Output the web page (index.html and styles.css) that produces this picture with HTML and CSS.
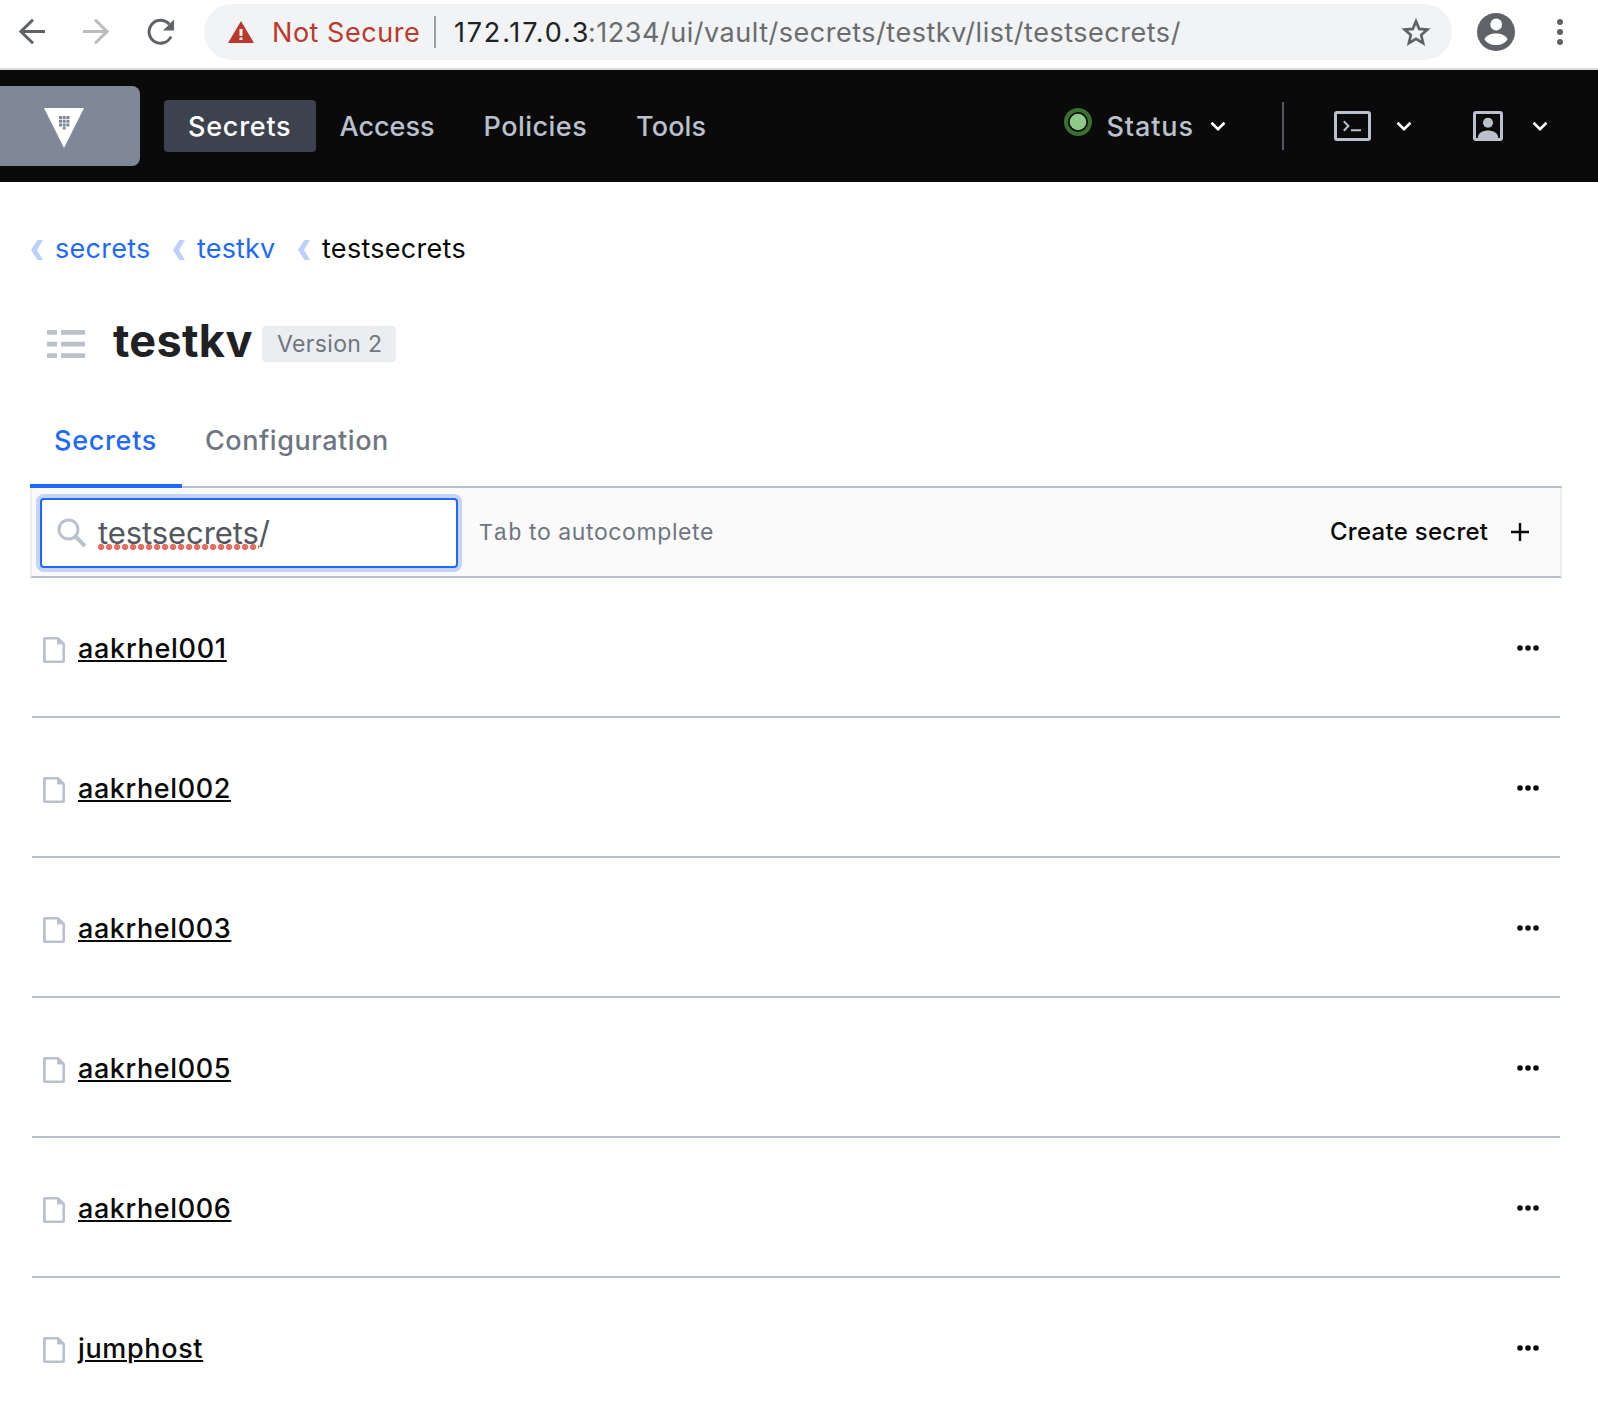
FILE: index.html
```
<!DOCTYPE html>
<html lang="en">
<head>
<meta charset="utf-8">
<title>Vault</title>
<link rel="stylesheet" href="styles.css">
</head>
<body>
<svg class="defs" aria-hidden="true">
  <symbol id="chevron" viewBox="0 0 16 10"><path d="M1.500 1.700 8 8.100l6.500-6.400" fill="none" stroke="#fff" stroke-width="2.600"/></symbol>
  <symbol id="crumb" viewBox="0 0 12 20"><path d="M6.500 0H12L6 10l6 10H6.500L0 10z" fill="#bdd0fc"/></symbol>
  <symbol id="file" viewBox="0 0 22 26"><path fill-rule="evenodd" d="M2 0h13.500L22 6.500V24a2 2 0 0 1-2 2H2a2 2 0 0 1-2-2V2a2 2 0 0 1 2-2zm.8 2.400v21.200h16.600V7.500H14V2.400z" fill="#bac1cc"/></symbol>
  <symbol id="more" viewBox="0 0 22 6"><g fill="#0a0a0a"><circle cx="3" cy="3" r="2.800"/><circle cx="11" cy="3" r="2.800"/><circle cx="19" cy="3" r="2.800"/></g></symbol>
</svg>

<div class="browser">
  <svg class="back" width="26" height="26" viewBox="0 0 26 26" fill="none" stroke="#5f6368" stroke-width="3"><path d="M26 12.500H2M14 .7 2 12.500 14 24.300"/></svg>
  <svg class="forward" width="26" height="26" viewBox="0 0 26 26" fill="none" stroke="#babcbe" stroke-width="3"><path d="M0 12.500h24M12 .7l12 11.800-12 11.800"/></svg>
  <svg class="reload" width="28" height="28" viewBox="0 0 28 28"><path d="M22.300 6.300A11.500 11.500 0 1 0 24 18.500" fill="none" stroke="#5f6368" stroke-width="3"/><path d="M27 1.500V12.500H16z" fill="#5f6368"/></svg>
  <div class="omnibox">
    <svg class="warn" width="26" height="22" viewBox="0 0 26 22"><path d="M13 0l13 22H0z" fill="#b93a2c"/><path d="M11.500 8h3v7h-3zM11.500 16.500h3v2.500h-3z" fill="#f1f3f4"/></svg>
    <span class="insecure">Not Secure</span>
    <span class="rule"></span>
    <span class="url"><span class="host">172.17.0.3</span><span class="path">:1234/ui/vault/secrets/testkv/list/testsecrets/</span></span>
    <svg class="star" width="30" height="29" viewBox="0 0 30 29"><path d="M15 3.200l3.200 7.700 8.200.7-6.200 5.400 1.900 8.100-7.100-4.300-7.100 4.300 1.900-8.100-6.200-5.400 8.200-.7z" fill="none" stroke="#5f6368" stroke-width="2.700"/></svg>
  </div>
  <svg class="avatar" width="38" height="38" viewBox="0 0 38 38"><circle cx="19" cy="19" r="19" fill="#5f6368"/><circle cx="19.200" cy="11.500" r="5.900" fill="#fff"/><path d="M7.500 26.200C9 22.500 14 20.600 19 20.600s10 1.900 11.500 5.600C28.500 29.800 24 32 19 32S9.500 29.800 7.500 26.200z" fill="#fff"/></svg>
  <svg class="kebab" width="6" height="26" viewBox="0 0 6 26" fill="#5f6368"><circle cx="3" cy="3" r="3"/><circle cx="3" cy="13" r="3"/><circle cx="3" cy="23" r="3"/></svg>
</div>

<nav class="nav">
  <a class="logo"><svg width="40" height="40" viewBox="0 0 40 40"><path d="M0 0h40L20 40z" fill="#fff"/><path d="M15 8h3v3h-3zm3.700 0h3v3h-3zm3.700 0h3v3h-3zM15 11.700h3v3h-3zm3.700 0h3v3h-3zm3.700 0h3v3h-3zM15 15.400h3v3h-3zm3.700 0h3v3h-3zm3.700 0h3v3h-3zM18.700 19.100h3v2.500h-3z" fill="#7f8896"/></svg></a>
  <a class="item active">Secrets</a>
  <a class="item access">Access</a>
  <a class="item policies">Policies</a>
  <a class="item tools">Tools</a>
  <svg class="health" width="28" height="28" viewBox="0 0 28 28"><circle cx="14" cy="14" r="12" fill="none" stroke="#39702f" stroke-width="4"/><circle cx="14" cy="14" r="8.300" fill="#8fca8a"/></svg>
  <span class="status">Status</span>
  <svg class="chev c1"><use href="#chevron"/></svg>
  <span class="divider"></span>
  <svg class="console" width="37" height="30" viewBox="0 0 37 30" fill="none" stroke="#bac1cc"><rect x="1.500" y="1.500" width="34" height="27" rx="1.500" stroke-width="3"/><path d="M9.800 10.200l4.600 4.800-4.600 4.800M17 19.300h10" stroke-width="2"/></svg>
  <svg class="chev c2"><use href="#chevron"/></svg>
  <svg class="user" width="30" height="30" viewBox="0 0 30 30"><rect x="1.500" y="1.500" width="27" height="27" rx="1.500" fill="none" stroke="#bac1cc" stroke-width="3"/><circle cx="15" cy="11.700" r="5" fill="#bac1cc"/><path d="M4.800 29v-3C5.500 21.500 10.500 19.500 15 19.500s9.500 2 10.200 6.500v3z" fill="#bac1cc"/></svg>
  <svg class="chev c3"><use href="#chevron"/></svg>
</nav>

<main class="page">
  <div class="crumbs">
    <svg class="crumb"><use href="#crumb"/></svg><a class="crumb-a">secrets</a>
    <svg class="crumb"><use href="#crumb"/></svg><a class="crumb-b">testkv</a>
    <svg class="crumb"><use href="#crumb"/></svg><span class="crumb-c">testsecrets</span>
  </div>
  <header class="heading">
    <svg class="engine" width="38" height="28" viewBox="0 0 38 28"><path d="M0 0h10v4.700H0zm14 0h24v4.700H14zM0 11.700h10v4.700H0zm14 0h24v4.700H14zM0 23.300h10V28H0zm14 0h24V28H14z" fill="#bac1cc"/></svg>
    <h1>testkv</h1>
    <span class="badge">Version 2</span>
  </header>
  <div class="tabs">
    <a class="tab current">Secrets</a>
    <a class="tab config">Configuration</a>
  </div>
  <div class="toolbar">
    <div class="search">
      <svg width="30" height="30" viewBox="0 0 30 30" fill="none" stroke="#bac1cc"><circle cx="11.500" cy="11.500" r="9.500" stroke-width="3"/><path d="M18.300 18.300 28 28" stroke-width="4"/></svg>
      <span class="query"><span class="misspelt">testsecrets</span>/</span>
    </div>
    <span class="hint"><kbd>Tab</kbd><span>to autocomplete</span></span>
    <a class="create">Create secret</a>
    <svg class="plus" width="18" height="18" viewBox="0 0 18 18"><path d="M9 0v18M0 9h18" stroke="#0a0a0a" stroke-width="2.400"/></svg>
  </div>
  <div class="list">
    <div class="row"><svg class="file"><use href="#file"/></svg><a class="name one">aakrhel001</a><svg class="more"><use href="#more"/></svg></div>
    <div class="row"><svg class="file"><use href="#file"/></svg><a class="name">aakrhel002</a><svg class="more"><use href="#more"/></svg></div>
    <div class="row"><svg class="file"><use href="#file"/></svg><a class="name">aakrhel003</a><svg class="more"><use href="#more"/></svg></div>
    <div class="row"><svg class="file"><use href="#file"/></svg><a class="name">aakrhel005</a><svg class="more"><use href="#more"/></svg></div>
    <div class="row"><svg class="file"><use href="#file"/></svg><a class="name">aakrhel006</a><svg class="more"><use href="#more"/></svg></div>
    <div class="row"><svg class="file"><use href="#file"/></svg><a class="name jump">jumphost</a><svg class="more"><use href="#more"/></svg></div>
  </div>
</main>
</body>
</html>
```
FILE: styles.css
```
* { box-sizing: border-box; }
html { overflow: hidden; }
body { margin: 0; height: 1404px; overflow: hidden; background: #fff; color: #0a0a0a; font: 400 27px/34px Inter, "Liberation Sans", sans-serif; white-space: nowrap; }
svg { display: block; flex: none; }
.defs { display: none; }

/* browser chrome */
.browser { display: flex; align-items: center; height: 70px; padding: 0 0 4px 19px; border-bottom: 2px solid #dadce0; }
.forward { margin-left: 38px; }
.reload { margin-left: 38px; }
.omnibox { display: flex; align-items: center; width: 1248px; height: 56px; margin-left: 29px; padding-left: 24px; border-radius: 28px; background: #f1f3f4; }
.insecure { width: 147px; margin: 2px 0 0 18px; color: #b93a2c; letter-spacing: .54px; }
.rule { width: 2px; height: 32px; margin-left: 15px; background: #9b9da0; }
.url { display: flex; width: 728px; margin: 2px 0 0 18px; }
.host { width: 134px; color: #202124; letter-spacing: 1.8px; }
.path { color: #6a6c6f; letter-spacing: .52px; }
.star { margin-left: 219px; }
.avatar { margin-left: 25px; }
.kebab { margin-left: 42px; }

/* top navigation */
.nav { display: flex; align-items: center; height: 112px; background: #0a0a0a; color: #bac1cc; font-weight: 550; }
.logo { display: flex; align-items: center; width: 140px; height: 80px; padding: 4px 0 0 44px; border-radius: 0 8px 8px 0; background: #7f8896; }
.item { flex: none; height: 52px; line-height: 54px; }
.active { width: 152px; margin-left: 24px; padding-left: 24px; border-radius: 4px; background: #3d434e; color: #fff; letter-spacing: .75px; }
.access { width: 96px; margin-left: 23.500px; letter-spacing: 0; }
.policies { width: 106px; margin-left: 48px; letter-spacing: .48px; }
.tools { width: 72px; margin-left: 46.500px; letter-spacing: .15px; }
.health { margin: 0 0 8px 356px; }
.status { width: 88px; margin: 2px 0 0 14.500px; letter-spacing: .87px; }
.chev { width: 16px; height: 10px; }
.c1 { margin-left: 15.500px; }
.divider { width: 2px; height: 48px; margin-left: 56px; background: #525761; }
.console { margin-left: 49.500px; }
.c2 { margin-left: 25px; }
.user { margin-left: 61px; }
.c3 { margin-left: 29px; }

/* page header */
.page { padding: 48px 36px 0 30px; }
.crumbs { display: flex; align-items: center; height: 37px; color: #1f69ff; }
.crumb { width: 12px; height: 20px; margin: 3px 0 0 1px; }
.crumb-a { width: 116.500px; margin-left: 12px; letter-spacing: .26px; }
.crumb-b { width: 100px; margin-left: 12.500px; letter-spacing: .16px; }
.crumb-c { margin-left: 12px; color: #0a0a0a; letter-spacing: .29px; }
.heading { display: flex; align-items: center; height: 60px; margin-top: 45px; padding-left: 17px; }
.engine { margin-top: 3px; }
h1 { width: 149px; margin: -2px 0 0 28px; color: #1f2124; font-size: 45px; font-weight: 700; line-height: 54px; letter-spacing: .3px; }
.badge { width: 134px; height: 36px; margin-top: 4px; padding-left: 15px; border-radius: 4px; background: #ebedf1; color: #6f7682; font-size: 23px; line-height: 36px; letter-spacing: .33px; }
.tabs { display: flex; height: 94px; margin-top: 22px; width: 1532px; border-bottom: 2px solid #bac1cc; font-weight: 550; color: #6f7682; }
.tab { height: 94px; padding-left: 24px; line-height: 94px; }
.current { width: 152px; border-bottom: 4px solid #1f69ff; color: #1f69ff; letter-spacing: .7px; }
.config { letter-spacing: .55px; padding-left: 23px; }

/* toolbar */
.toolbar { display: flex; align-items: center; width: 1532px; height: 90px; padding-left: 8px; border: solid #ebedf2; border-width: 0 2px 2px; border-bottom-color: #bac1cc; background: #fafafa; font-size: 23px; }
.search { display: flex; align-items: center; width: 418px; height: 70px; margin-top: 2px; padding-left: 15px; border: 2px solid #1f69ff; border-radius: 4px; background: #fff; box-shadow: 0 0 0 4px #c5d4fa; color: #525761; font-size: 31px; line-height: 46px; letter-spacing: -.08px; }
.query { margin-left: 11px; }
.misspelt { background: radial-gradient(circle at 3px 3px, #ed6a5e 2.800px, transparent 3.300px) 0 calc(100% - 1px) / 8px 6px repeat-x; }
.hint { display: flex; align-items: center; width: 300px; margin-left: 21px; color: #6f7682; letter-spacing: .6px; }
kbd { width: 50px; padding-top: 3px; font: 23px/34px "Liberation Mono", monospace; letter-spacing: .7px; }
.create { width: 160px; margin-left: 551px; font-size: 24px; font-weight: 550; letter-spacing: .27px; }
.plus { margin-left: 21px; }

/* secret list */
.list { padding: 0 2px; }
.row { display: flex; align-items: center; width: 1528px; height: 140px; padding: 2px 21px 0 11px; border-bottom: 2px solid #bac1cc; }
.row:last-child { border-color: transparent; }
.file { width: 22px; height: 26px; margin-top: 4px; }
.name { margin: 2px 0 0 13px; font-weight: 550; letter-spacing: .6px; text-decoration: underline; text-decoration-thickness: 2px; text-underline-offset: 2px; }
.one { letter-spacing: .72px; }
.jump { letter-spacing: .65px; }
.more { width: 22px; height: 6px; margin: 0 0 0 auto; }
```
